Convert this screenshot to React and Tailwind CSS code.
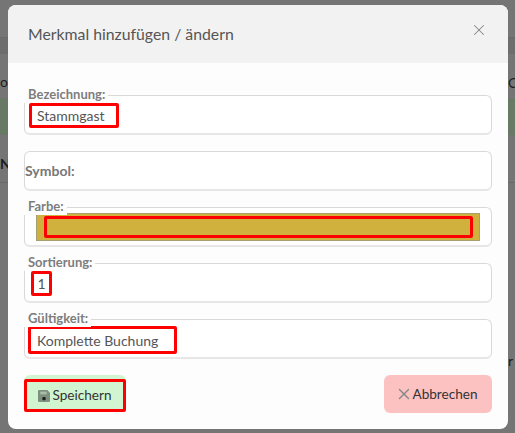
import React from 'react';
import { X } from 'lucide-react';

const RED = 'border-[3px] border-[#f00] rounded-[2px]';
const BOX = 'relative h-10 rounded-md border border-[#d9d9d9] border-b-2 border-b-[#e6e6e6] bg-white';

function Field({ label, children }) {
  return (
    <div className={BOX}>
      <span className="absolute -left-[1px] -top-[10px] h-[17px] bg-[#fdfdfd] pl-[4px] pr-[3px] text-[13px] font-bold leading-[17px] text-[#7d7d7d]">{label}</span>
      {children}
    </div>
  );
}

function SaveIcon() {
  return (
    <svg width="12" height="12" viewBox="1 1 11 11">
      <path d="M2 1h7.5L12 3.5V11a1 1 0 0 1-1 1H2a1 1 0 0 1-1-1V2a1 1 0 0 1 1-1z" fill="#7d8f7d" />
      <rect x="3" y="2.5" width="6" height="2.5" fill="#a9bda9" />
      <rect x="5" y="7.5" width="3" height="3" rx="1" fill="#1f1f1f" />
    </svg>
  );
}

function Backdrop() {
  return (
    <div className="absolute inset-0 overflow-hidden bg-[#757575] text-[14px] text-[#1c1c1c]">
      <div className="mt-[37px] h-[17px] border-t border-[#6a6a6a] bg-[#6d6d6d]" />
      <div className="h-[44px] bg-[#757575] pt-[20px] leading-4">o</div>
      <div className="h-[37px] bg-[#687a66]" />
      <div className="h-[48px] border-b border-[#696969] pt-[21px] font-bold leading-4">Na</div>
    </div>
  );
}

export default function App() {
  return (
    <div className="relative h-[433px] w-[515px] overflow-hidden font-['Lato','Liberation_Sans',sans-serif]">
      <Backdrop />
      <span className="absolute left-[508px] top-[72px] text-[14px] text-[#1c1c1c]">C</span>
      <span className="absolute left-[508px] top-[350px] text-[14px] text-[#1c1c1c]">r</span>
      <span className="absolute left-[400px] top-[430px] whitespace-nowrap text-[14px] leading-4 text-[#1c1c1c]">Weihnachts-fil</span>

      <div className="absolute left-[8px] top-[5px] h-[424px] w-[500px] overflow-hidden rounded-[8px] bg-[#fdfdfd]">
        <div className="flex h-[58px] items-center justify-between bg-[#f2f2f2] pb-[1px] pl-[20px] pr-[20px]">
          <h5 className="text-[15.8px] leading-5 text-[#555]">Merkmal hinzufügen / ändern</h5>
          <X size={18} strokeWidth={1.4} className="-mt-[8px] text-[#888]" />
        </div>

        <div className="flex flex-col gap-[16px] px-[16px] pt-[32px]">
          <Field label="Bezeichnung:">
            <div className={`${RED} ml-[4px] mt-[7px] flex h-[25px] w-[90px] items-center pl-[5px] text-[14px] text-[#555]`}>Stammgast</div>
          </Field>

          <div className={`${BOX} flex items-center text-[14px] font-bold text-[#777]`}>
            Symbol:
          </div>

          <Field label="Farbe:">
            <div className="ml-[11px] mr-[11px] mt-[5px] flex h-[28px] items-center border border-[#a89f70] bg-[#d0b13e] pl-[7px] pr-[6px]">
              <div className={`${RED} h-[22px] w-full`} />
            </div>
          </Field>

          <Field label="Sortierung:">
            <div className={`${RED} ml-[6px] mt-[7px] flex h-[25px] w-[21px] items-center justify-center text-[14px] text-[#555]`}>1</div>
          </Field>

          <Field label="Gültigkeit:">
            <div className={`${RED} ml-[3px] mt-[6px] flex h-[28px] w-[149px] items-center pl-[6px] text-[14px] text-[#555]`}>Komplette Buchung</div>
          </Field>

          <div className="flex items-start justify-between">
            <div className="h-[37px] w-[102px] rounded-md bg-[#d0f5d0] pt-[4px]">
              <button className={`${RED} flex h-[33px] w-full items-center justify-center text-[13.6px] text-[#333]`}>
                <SaveIcon />
                <span className="ml-[2px]">Speichern</span>
              </button>
            </div>
            <button className="flex h-[38px] w-[108px] items-center justify-center rounded-md bg-[#fcc2c2] text-[13.6px] text-[#333]">
              <X size={18} strokeWidth={2} className="-mx-[3px] text-[#888]" />
              <span className="ml-[2px]">Abbrechen</span>
            </button>
          </div>
        </div>
      </div>
    </div>
  );
}
